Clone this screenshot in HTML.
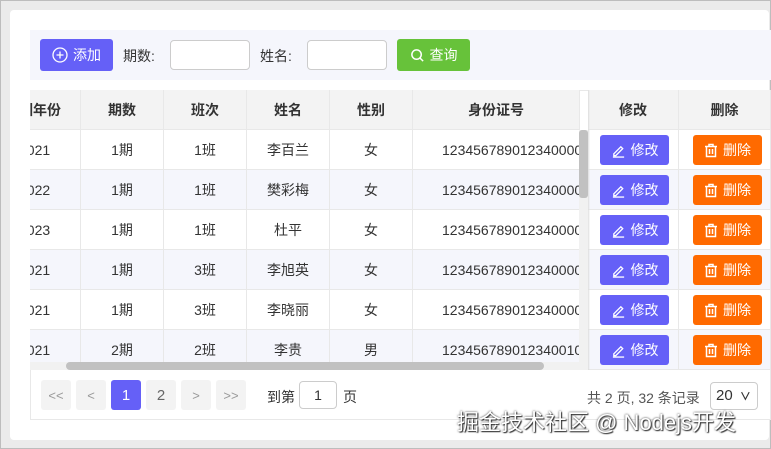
<!DOCTYPE html><html><head><meta charset="utf-8"><style>
*{box-sizing:border-box;margin:0;padding:0}
body{width:771px;height:449px;background:#ebebeb;font-family:"Liberation Sans","Noto Sans CJK SC",sans-serif;font-size:14px;color:#333;position:relative;overflow:hidden}
.card{position:absolute;left:10px;top:10px;width:759px;height:430px;background:#fff;border-radius:4px}
.a{position:absolute}
.tb{left:30px;top:30px;width:741px;height:50px;background:#f5f6fc}
.btn{position:absolute;color:#fff;border-radius:3px;display:flex;align-items:center;justify-content:center;font-size:14px;gap:5px}
.inp{position:absolute;background:#fff;border:1px solid #ccc;border-radius:4px}
.cell{position:absolute;display:flex;align-items:center;justify-content:center;border-right:1px solid #e8e8e8;border-bottom:1px solid #e8e8e8;height:40px;overflow:hidden;white-space:nowrap}
.h{background:#f3f3f3;font-weight:bold;height:40px}
.pg{position:absolute;top:380px;height:30px;background:#f3f3f3;border-radius:3px;display:flex;align-items:center;justify-content:center;color:#999;font-size:13px}
</style></head><body>
<div class="a" style="left:0;top:0;width:771px;height:449px;border:1px solid #bdbdbd"></div>
<div class="card"></div>
<div class="a tb"></div>
<div class="btn" style="left:40px;top:39px;width:73px;height:32px;background:#6560f7"><svg width="16" height="16" viewBox="0 0 16 16"><circle cx="8" cy="8" r="7" fill="none" stroke="#fff" stroke-width="1.3"/><path d="M8 4.5v7M4.5 8h7" stroke="#fff" stroke-width="1.3"/></svg>添加</div>
<div class="a" style="left:123px;top:46px">期数:</div>
<div class="inp" style="left:170px;top:40px;width:80px;height:30px"></div>
<div class="a" style="left:260px;top:46px">姓名:</div>
<div class="inp" style="left:307px;top:40px;width:80px;height:30px"></div>
<div class="btn" style="left:397px;top:39px;width:73px;height:32px;background:#67c23a"><svg width="15" height="15" viewBox="0 0 16 16"><circle cx="7" cy="7" r="5" fill="none" stroke="#fff" stroke-width="1.6"/><path d="M10.5 10.5l3.5 3.5" stroke="#fff" stroke-width="1.6"/></svg>查询</div>
<div class="a" style="left:30px;top:90px;width:741px;height:280px;border-left:1px solid #e8e8e8;border-top:1px solid #e8e8e8"></div>
<div id="t"></div>
<div class="a" style="left:30px;top:362px;width:549px;height:8px;background:#f1f1f1"></div>
<div class="a" style="left:66px;top:362px;width:478px;height:8px;background:#c1c1c1;border-radius:4px"></div>
<div class="a" style="left:579px;top:130px;width:9px;height:240px;background:#f1f1f1"></div>
<div class="a" style="left:579px;top:130px;width:9px;height:68px;background:#c1c1c1;border-radius:3px"></div>
<div class="a" style="left:588px;top:90px;width:2px;height:280px;background:linear-gradient(90deg,#ddd,#fff0)"></div>
<div class="a" style="left:30px;top:370px;width:741px;height:50px;border:1px solid #e8e8e8;border-top:none;background:#fff"></div>
<div class="pg" style="left:41px;width:30px">&lt;&lt;</div>
<div class="pg" style="left:76px;width:30px">&lt;</div>
<div class="pg" style="left:111px;width:30px;background:#6560f7;color:#fff;font-size:15px">1</div>
<div class="pg" style="left:146px;width:30px;font-size:15px;color:#666">2</div>
<div class="pg" style="left:181px;width:30px">&gt;</div>
<div class="pg" style="left:216px;width:30px">&gt;&gt;</div>
<div class="a" style="left:267px;top:387px">到第</div>
<div class="inp" style="left:299px;top:381px;width:38px;height:28px;display:flex;align-items:center;justify-content:center;font-size:14px">1</div>
<div class="a" style="left:343px;top:387px">页</div>
<div class="a" style="left:587px;top:388px;color:#555">共 2 页, 32 条记录</div>
<div class="inp" style="left:710px;top:382px;width:48px;height:28px;font-size:15px;padding:4px 0 0 5px">20 <span style="font-size:11px;margin-left:3px;font-weight:bold">&#8744;</span></div>
<div class="a" style="left:457px;top:405px;font-size:22px;color:#fff;text-shadow:0 0 2px #333,1px 1px 1px #333">掘金技术社区 @ Nodejs开发</div>
<script>
var cols=[[30,51],[81,83],[164,83],[247,83],[330,83],[413,167]];
var H=["训年份","期数","班次","姓名","性别","身份证号"];
var R=[["2021","1期","1班","李百兰","女","123456789012340000"],["2022","1期","1班","樊彩梅","女","123456789012340000"],["2023","1期","1班","杜平","女","123456789012340000"],["2021","1期","3班","李旭英","女","123456789012340000"],["2021","1期","3班","李晓丽","女","123456789012340000"],["2021","2期","2班","李贵","男","123456789012340010"]];
var h="";
function c(x,w,y,t,cls,bg,al){h+='<div class="cell '+cls+'" style="left:'+x+'px;top:'+y+'px;width:'+w+'px;background:'+bg+';justify-content:'+(al||'center')+'">'+t+'</div>';}
H.forEach(function(t,i){c(cols[i][0],cols[i][1],90,i==0?'<span style="margin-left:-11px">'+t+'</span>':t,'h','#f3f3f3',i==0?'flex-start':'center');});
c(588,91,90,'修改','h','#f3f3f3');c(679,92,90,'删除','h','#f3f3f3');
R.forEach(function(r,j){var y=130+j*40,bg=j%2?'#f5f6fc':'#fff';
r.forEach(function(t,i){var tt=t;if(i==0)tt='<span style="margin-left:-11px">'+t+'</span>';if(i==5)tt='<span style="margin-left:29px">'+t+'</span>';c(cols[i][0],cols[i][1],y,tt,'',bg,i==0?'flex-start':(i==5?'flex-start':'center'));});
c(588,91,y,'','',bg);c(679,92,y,'','',bg);
h+='<div class="btn" style="left:600px;top:'+(y+5)+'px;width:69px;height:30px;background:#6560f7"><svg width="15" height="15" viewBox="0 0 16 16"><path d="M3 11.5l7.5-7.5 2 2L5 13.5H3z" fill="none" stroke="#fff" stroke-width="1.4"/><path d="M2 15h12" stroke="#fff" stroke-width="1.4"/></svg>修改</div>';
h+='<div class="btn" style="left:693px;top:'+(y+5)+'px;width:69px;height:30px;background:#ff6a00"><svg width="14" height="15" viewBox="0 0 14 15"><path d="M1 3.5h12M5 3.5V1.5h4v2M2.5 3.5v10h9v-10M5.5 6v5M8.5 6v5" fill="none" stroke="#fff" stroke-width="1.5"/></svg>删除</div>';
});
document.getElementById('t').innerHTML=h;
</script>
</body></html>
